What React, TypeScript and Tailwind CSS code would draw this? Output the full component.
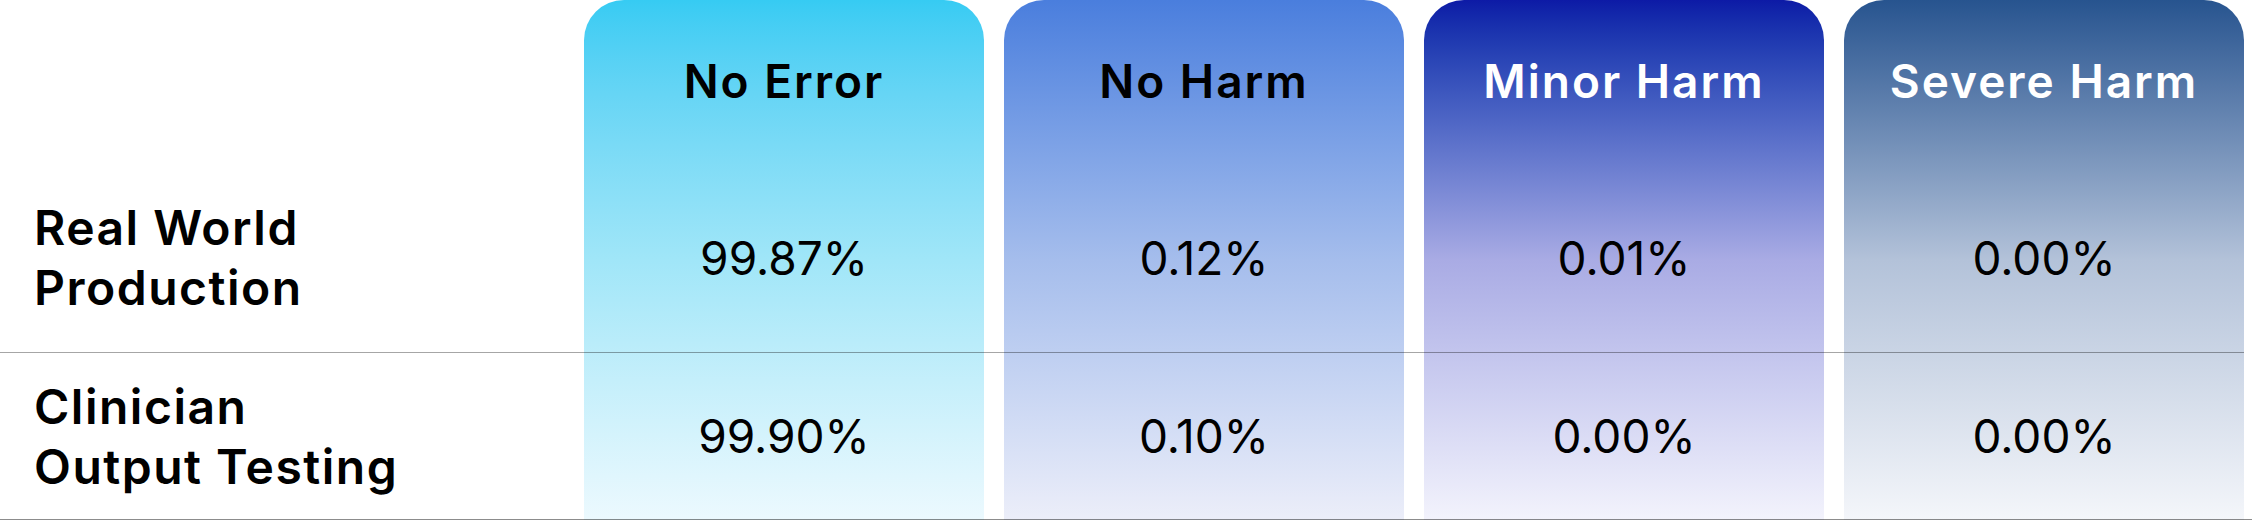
const columns = [
  {
    name: 'No Error',
    head: 'text-black',
    bg: 'bg-gradient-to-b from-[#36cbf3] via-[#a0e6f8] to-[#ecf9fe]',
    values: ['99.87%', '99.90%'],
  },
  {
    name: 'No Harm',
    head: 'text-black',
    bg: 'bg-gradient-to-b from-[#4a7edd] via-[#a5bdec] to-[#eceef9]',
    values: ['0.12%', '0.10%'],
  },
  {
    name: 'Minor Harm',
    head: 'text-white',
    bg: 'bg-gradient-to-b from-[#0d1aa6] via-[#a9abe4] to-[#f3f3fc]',
    values: ['0.01%', '0.00%'],
  },
  {
    name: 'Severe Harm',
    head: 'text-white',
    bg: 'bg-gradient-to-b from-[#27548f] via-[#b3c2d9] to-[#f4f6fa]',
    values: ['0.00%', '0.00%'],
  },
]

const colStart = ['col-start-2', 'col-start-3', 'col-start-4', 'col-start-5']

export default function App() {
  return (
    <div
      className="w-[2252px] h-[520px] bg-white overflow-hidden"
      style={{ fontFamily: 'Inter, "Noto Sans", sans-serif' }}
    >
      <div className="grid grid-cols-[564px_400px_400px_400px_400px] grid-rows-[163px_190px_167px] gap-x-[20px] text-black">
        {/* column backgrounds */}
        {columns.map((c, i) => (
          <div key={c.name} className={`${colStart[i]} row-start-1 row-end-4 rounded-t-[40px] ${c.bg}`} />
        ))}

        {/* row rules */}
        <div className="col-start-1 col-end-6 row-start-2 border-b border-black/35" />
        <div className="col-start-1 col-end-6 row-start-3 border-b border-black/45 mr-[-8px]" />

        {/* headers */}
        {columns.map((c, i) => (
          <div
            key={c.name + 'h'}
            className={`${colStart[i]} row-start-1 flex items-center justify-center text-[46px] font-semibold tracking-[2px] ${c.head}`}
          >
            {c.name}
          </div>
        ))}

        {/* labels */}
        <div className="col-start-1 row-start-2 flex items-center pl-[34px] text-[48px] font-semibold tracking-[1.5px] leading-[60px]">
          <div>
            Real World
            <br />
            Production
          </div>
        </div>
        <div className="col-start-1 row-start-3 flex items-center pl-[34px] text-[48px] font-semibold tracking-[1.5px] leading-[60px]">
          <div>
            Clinician
            <br />
            Output Testing
          </div>
        </div>

        {/* values */}
        {columns.map((c, i) =>
          c.values.map((v, r) => (
            <div
              key={c.name + r}
              className={`${colStart[i]} ${r === 0 ? 'row-start-2' : 'row-start-3'} flex items-center justify-center text-[46px] font-normal`}
            >
              {v}
            </div>
          ))
        )}
      </div>
    </div>
  )
}
